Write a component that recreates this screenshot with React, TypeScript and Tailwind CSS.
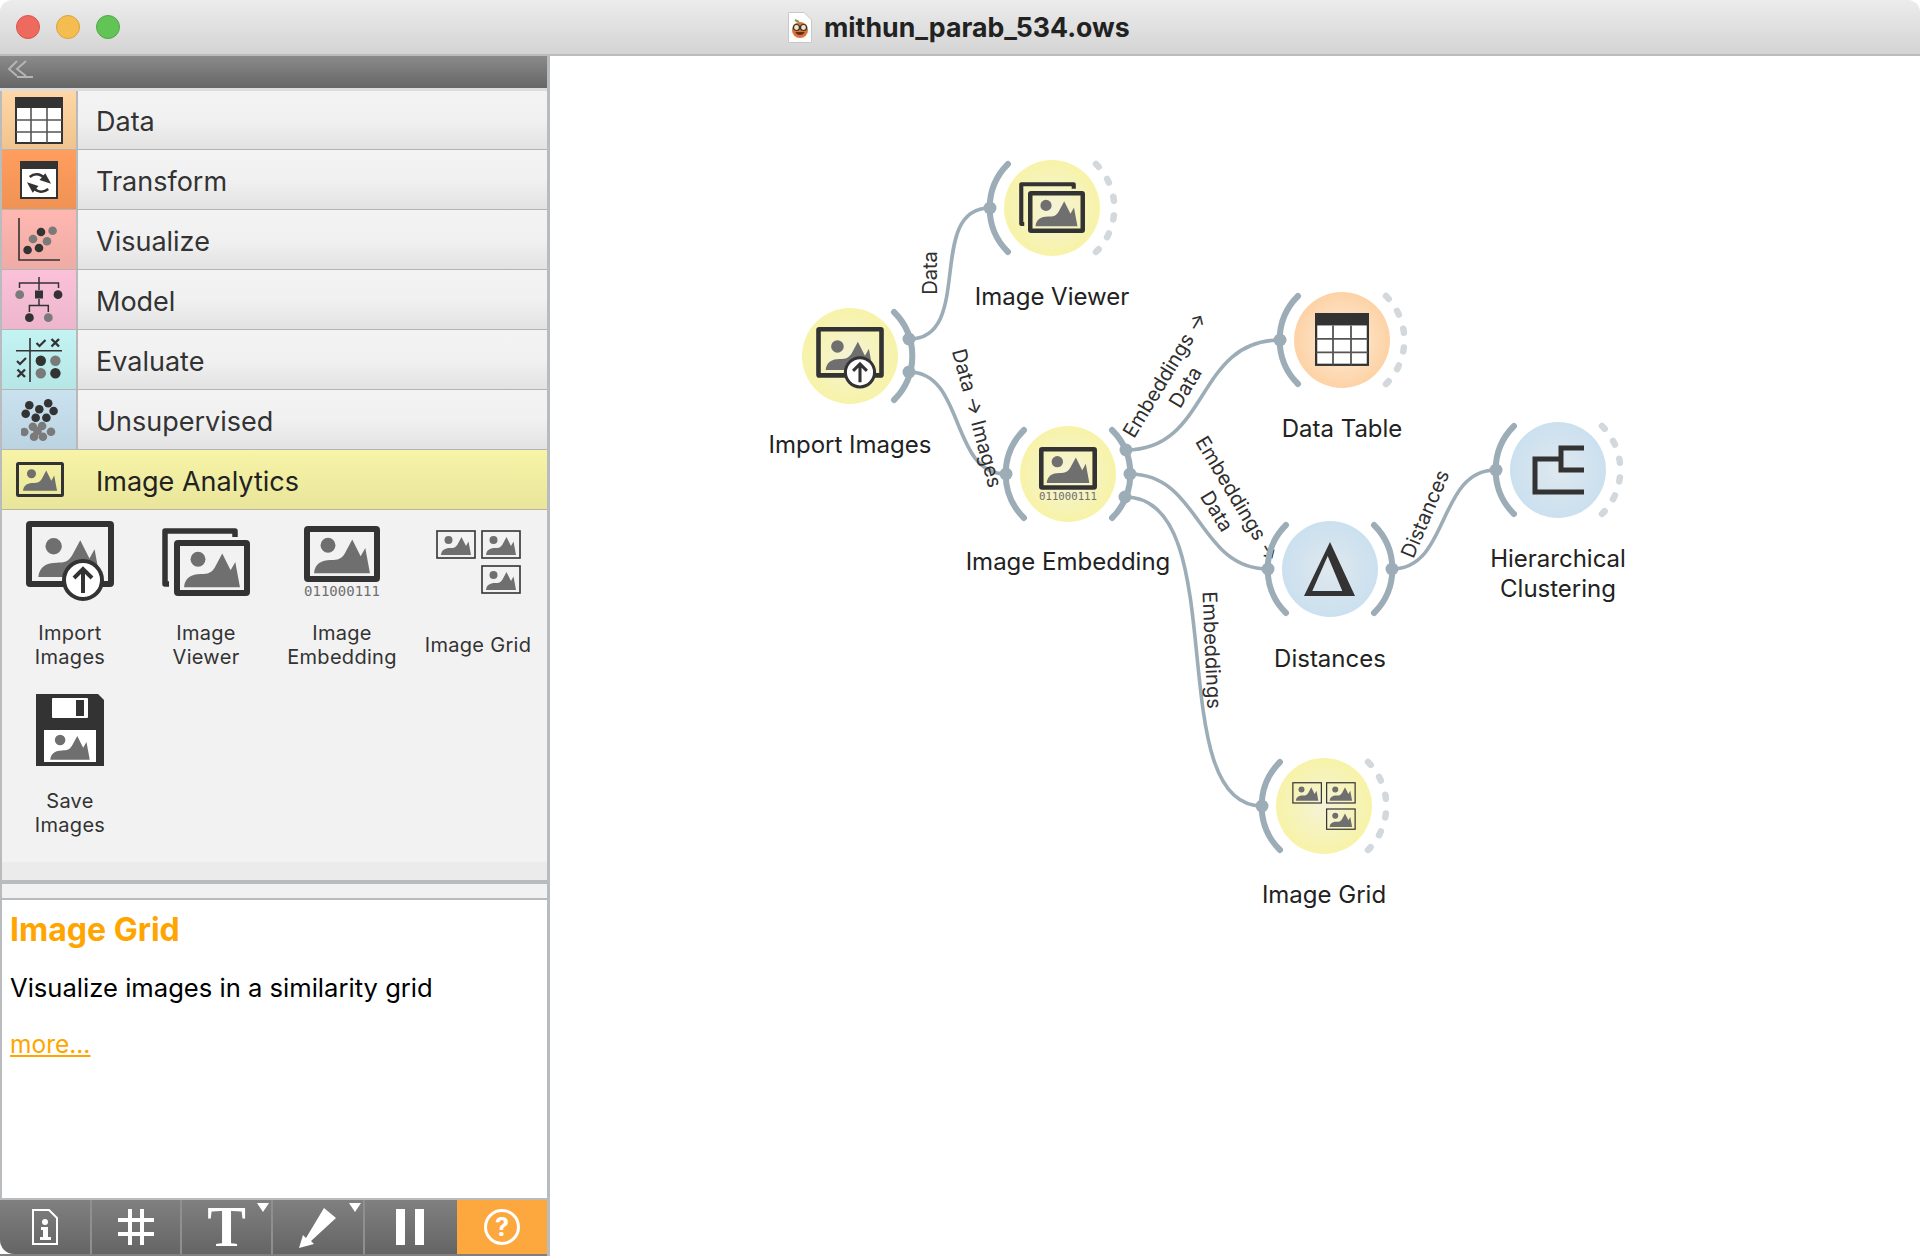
import React from 'react';

type SvgProps = React.SVGProps<SVGSVGElement>;

const DARK = '#333333';
const GRAY = '#6f6f6f';

// person + mountains, the glyph every image widget shares
const Pic = (props: SvgProps) => (
  <svg viewBox="0 0 64 44" {...props}>
    <circle cx="17" cy="12" r="8" fill={GRAY} />
    <path d="M2 42 C3 32 10 28 20 28 C28 28 31 27 35 21 L43 6 L52 24 L57 15 L62 42 Z" fill={GRAY} />
  </svg>
);

const ImportIcon = (props: SvgProps) => (
  <svg viewBox="0 0 88 82" {...props}>
    <rect x="3" y="3" width="82" height="60" rx="1" fill="none" stroke={DARK} strokeWidth="6" />
    <Pic x="10" y="13" width="66" height="45" />
    <circle cx="57" cy="59" r="19" fill="#fff" stroke={DARK} strokeWidth="4" />
    <path d="M57 72 V48 M48 57 L57 48 L66 57" fill="none" stroke={DARK} strokeWidth="4" />
  </svg>
);

const ViewerIcon = (props: SvgProps) => (
  <svg viewBox="0 0 88 68" {...props}>
    <path d="M7 56 H3 V3 H73 V9" fill="none" stroke={DARK} strokeWidth="5.5" strokeLinejoin="round" />
    <rect x="15" y="15" width="70" height="50" rx="1" fill="none" stroke={DARK} strokeWidth="6" />
    <Pic x="20" y="20" width="60" height="41" />
  </svg>
);

const EmbeddingIcon = (props: SvgProps) => (
  <svg viewBox="0 0 76 72" {...props}>
    <rect x="3" y="3" width="70" height="50" rx="1" fill="none" stroke={DARK} strokeWidth="6" />
    <Pic x="8" y="8" width="60" height="41" />
    <text x="38" y="70" textAnchor="middle" fontSize="14" fill={GRAY} fontFamily="'DejaVu Sans Mono', monospace">
      011000111
    </text>
  </svg>
);

const GridIcon = (props: SvgProps) => (
  <svg viewBox="0 0 85 64" {...props}>
    {[[1, 1], [46, 1], [46, 36]].map(([x, y]) => (
      <g key={`${x}-${y}`}>
        <rect x={x} y={y} width="38" height="27" fill="none" stroke={DARK} strokeWidth="1.6" />
        <Pic x={x + 3} y={y + 3} width="32" height="22" />
      </g>
    ))}
  </svg>
);

const SaveIcon = (props: SvgProps) => (
  <svg viewBox="0 0 68 72" {...props}>
    <path d="M0 0 H62 L68 6 V72 H0 Z" fill={DARK} />
    <rect x="16" y="4" width="36" height="20" rx="1" fill="#fff" />
    <rect x="40" y="6" width="8" height="16" fill={DARK} />
    <rect x="8" y="36" width="52" height="32" fill="#fff" />
    <Pic x="10" y="38" width="48" height="29" />
  </svg>
);

const TableIcon = (props: SvgProps) => (
  <svg viewBox="0 0 48 47" {...props}>
    <rect x="1" y="1" width="46" height="45" fill="#fff" stroke={DARK} strokeWidth="2" />
    <rect x="0" y="0" width="48" height="11" fill={DARK} />
    <path d="M16 11 V46 M32 11 V46 M1 23 H47 M1 35 H47" stroke="#555" strokeWidth="1.6" />
  </svg>
);

const TransformIcon = (props: SvgProps) => (
  <svg viewBox="0 0 38 38" {...props}>
    <rect x="1" y="1" width="36" height="36" fill="#fff" stroke={DARK} strokeWidth="2" />
    <rect x="0" y="0" width="38" height="8" fill={DARK} />
    <g transform="rotate(28 19 22)">
      <path d="M8 21 C10 16 15 13 22 15" fill="none" stroke={DARK} strokeWidth="2.6" />
      <path d="M20 10.5 L30 17 L18 19 Z" fill={DARK} />
      <path d="M30 23 C28 28 23 31 16 29" fill="none" stroke={DARK} strokeWidth="2.6" />
      <path d="M18 33.5 L8 27 L20 25 Z" fill={DARK} />
    </g>
  </svg>
);

const Dots = ({ items, r }: { items: number[][]; r: number }) => (
  <>
    {items.map(([x, y, g], i) => (
      <circle key={i} cx={x} cy={y} r={r} fill={g ? '#7a7a7a' : DARK} />
    ))}
  </>
);

const VisualizeIcon = (props: SvgProps) => (
  <svg viewBox="0 0 42 43" {...props}>
    <path d="M1 0 V42 H42" fill="none" stroke={DARK} strokeWidth="1.6" />
    <Dots r={4.3} items={[[23, 14, 0], [34.6, 12.7, 1], [15, 21, 1], [29, 23.3, 1], [21, 30, 0], [9.6, 32, 0]]} />
  </svg>
);

const ModelIcon = (props: SvgProps) => (
  <svg viewBox="0 0 48 46" {...props}>
    <path d="M24 0 V13 M4.5 11 V6 H43.5 V11 M24 22 V28 M14.4 35 V28.5 H33.3 V35" fill="none" stroke={DARK} strokeWidth="1.5" />
    <rect x="20" y="13.5" width="8" height="8" fill={DARK} />
    <Dots r={4.4} items={[[4.7, 17.7, 1], [43, 17.7, 0], [14.4, 40.7, 0], [33.3, 40.7, 1]]} />
  </svg>
);

const EvaluateIcon = (props: SvgProps) => (
  <svg viewBox="0 0 46 44" {...props}>
    <path d="M14 0 V44 M0 12.7 H46" stroke={DARK} strokeWidth="1.6" />
    <path d="M20.5 5 L23.5 8 L29.5 2 M1 23 L4 26 L10 20" fill="none" stroke={DARK} strokeWidth="2.2" />
    <path d="M35.5 1 L43 8.5 M43 1 L35.5 8.5 M1.5 31.5 L9 39 M9 31.5 L1.5 39" stroke={DARK} strokeWidth="2.4" />
    <Dots r={5.2} items={[[24.8, 22.7, 0], [39.4, 22.7, 1], [24.8, 35.3, 1], [39.4, 35.3, 0]]} />
  </svg>
);

const UnsupervisedIcon = (props: SvgProps) => (
  <svg viewBox="0 0 37 42" {...props}>
    <Dots
      r={4.3}
      items={[
        [8.3, 6.3, 0], [27.2, 4.3, 0], [18.3, 10.3, 0], [32.6, 12, 0], [4.7, 14.7, 0], [14.7, 18.7, 0], [25.4, 18.7, 0],
        [11.9, 27.7, 1], [21.1, 27, 1], [3.3, 33, 1], [30, 32.7, 1], [13, 37.7, 1], [21.9, 37.7, 1], [16.5, 32, 1],
      ]}
    />
  </svg>
);

const AnalyticsIcon = (props: SvgProps) => (
  <svg viewBox="0 0 48 35" {...props}>
    <rect x="1.5" y="1.5" width="45" height="32" rx="1" fill="none" stroke={DARK} strokeWidth="3" />
    <Pic x="5" y="5" width="38" height="25" />
  </svg>
);

const categories = [
  { name: 'Data', bg: 'bg-gradient-to-b from-[#ffd6a6] to-[#f0c48e]', icon: <TableIcon width="48" height="47" /> },
  { name: 'Transform', bg: 'bg-gradient-to-b from-[#ff9d5e] to-[#ef9355]', icon: <TransformIcon width="38" height="38" /> },
  { name: 'Visualize', bg: 'bg-gradient-to-b from-[#ffb7b1] to-[#efaba5]', icon: <VisualizeIcon width="42" height="43" /> },
  { name: 'Model', bg: 'bg-gradient-to-b from-[#fac1d9] to-[#eeb6cd]', icon: <ModelIcon width="48" height="46" /> },
  { name: 'Evaluate', bg: 'bg-gradient-to-b from-[#c3f3f3] to-[#b6e6e6]', icon: <EvaluateIcon width="46" height="44" /> },
  { name: 'Unsupervised', bg: 'bg-gradient-to-b from-[#cae1ef] to-[#bcd3e2]', icon: <UnsupervisedIcon width="37" height="42" /> },
];

const widgets = [
  { name: 'Import\nImages', icon: <ImportIcon width="88" height="82" /> },
  { name: 'Image\nViewer', icon: <ViewerIcon width="88" height="68" /> },
  { name: 'Image\nEmbedding', icon: <EmbeddingIcon width="76" height="72" /> },
  { name: 'Image Grid', icon: <GridIcon width="85" height="64" /> },
  { name: 'Save\nImages', icon: <SaveIcon width="68" height="72" /> },
];

// the canvas svg uses page coordinates through its viewBox
type CanvasNode = {
  x: number;
  y: number;
  caption: string;
  captionY: number;
  fill: string;
  left: boolean;
  right: 'solid' | 'open';
  glyph: (cx: number, cy: number) => React.ReactNode;
};

const nodes: CanvasNode[] = [
  {
    x: 850, y: 356, caption: 'Import Images', captionY: 445, fill: 'url(#yellow)', left: false, right: 'solid',
    glyph: (x, y) => <ImportIcon x={x - 34} y={y - 29} width="68" height="63" />,
  },
  {
    x: 1052, y: 208, caption: 'Image Viewer', captionY: 297, fill: 'url(#yellow)', left: true, right: 'open',
    glyph: (x, y) => <ViewerIcon x={x - 33} y={y - 26} width="66" height="51" />,
  },
  {
    x: 1068, y: 474, caption: 'Image Embedding', captionY: 562, fill: 'url(#yellow)', left: true, right: 'solid',
    glyph: (x, y) => <EmbeddingIcon x={x - 29} y={y - 27} width="58" height="55" />,
  },
  {
    x: 1342, y: 340, caption: 'Data Table', captionY: 429, fill: 'url(#orange)', left: true, right: 'open',
    glyph: (x, y) => <TableIcon x={x - 27} y={y - 27} width="54" height="53" />,
  },
  {
    x: 1330, y: 569, caption: 'Distances', captionY: 659, fill: 'url(#blue)', left: true, right: 'solid',
    glyph: (x, y) => (
      <path
        fillRule="evenodd"
        fill={DARK}
        d={`M${x} ${y - 27} L${x + 25} ${y + 27} H${x - 26} Z M${x - 2.3} ${y - 13} L${x - 17.7} ${y + 22} H${x + 12.3} Z`}
      />
    ),
  },
  {
    x: 1558, y: 470, caption: 'Hierarchical\nClustering', captionY: 574, fill: 'url(#blue)', left: true, right: 'open',
    glyph: (x, y) => (
      <path
        d={`M${x + 26} ${y - 22} H${x + 3} V${y} H${x + 26} M${x + 3} ${y - 11} H${x - 23} V${y + 22} H${x + 26}`}
        fill="none"
        stroke={DARK}
        strokeWidth="5"
      />
    ),
  },
  {
    x: 1324, y: 806, caption: 'Image Grid', captionY: 895, fill: 'url(#yellow)', left: true, right: 'open',
    glyph: (x, y) => <GridIcon x={x - 32} y={y - 24} width="64" height="48" />,
  },
];

const links = [
  'M909 339 C975 339 925 208 990 208',
  'M909 372 C965 372 950 474 1006 474',
  'M1126 450 C1210 450 1195 340 1280 340',
  'M1130 474 C1200 474 1198 569 1268 569',
  'M1125 497 C1235 497 1160 806 1262 806',
  'M1392 569 C1450 569 1437 470 1496 470',
];

const anchors = [
  [909, 339], [909, 372], [1006, 474], [1126, 450], [1130, 474], [1125, 497],
  [990, 208], [1280, 340], [1268, 569], [1392, 569], [1496, 470], [1262, 806],
];

const LinkLabel = ({ x, y, angle, lines }: { x: number; y: number; angle: number; lines: string[] }) => (
  <text transform={`translate(${x} ${y}) rotate(${angle})`} textAnchor="middle" fontSize="20" fill="#2f2f2f">
    {lines.map((line, i) => (
      <tspan key={i} x="0" y={i * 24 - (lines.length - 1) * 12 + 7}>
        {line}
      </tspan>
    ))}
  </text>
);

const Canvas = () => (
  <div className="relative flex-1 bg-white">
    <svg viewBox="550 56 1370 1200" className="absolute inset-0 h-full w-full">
      <defs>
        <radialGradient id="yellow">
          <stop offset="0%" stopColor="#f5f3d8" />
          <stop offset="100%" stopColor="#f7f3a8" />
        </radialGradient>
        <radialGradient id="orange">
          <stop offset="0%" stopColor="#fdeedd" />
          <stop offset="100%" stopColor="#fdd2a5" />
        </radialGradient>
        <radialGradient id="blue">
          <stop offset="0%" stopColor="#dfe8ee" />
          <stop offset="100%" stopColor="#cbe0ef" />
        </radialGradient>
      </defs>

      {links.map((d) => (
        <path key={d} d={d} fill="none" stroke="#9cadb7" strokeWidth="3.6" />
      ))}

      {/* this label runs under the Distances node, its arrow is cut off there */}
      <LinkLabel x={1227} y={505} angle={59} lines={['Embeddings →', 'Data']} />

      {nodes.map((n) => (
        <g key={n.caption}>
          <circle cx={n.x} cy={n.y} r="58" fill="#fff" />
          <circle cx={n.x} cy={n.y} r="48" fill={n.fill} />
          {n.glyph(n.x, n.y)}
          {n.left && (
            <path
              d={`M${n.x - 44} ${n.y - 44} A62 62 0 0 0 ${n.x - 44} ${n.y + 44}`}
              fill="none"
              stroke="#9cadb7"
              strokeWidth="6"
              strokeLinecap="round"
            />
          )}
          {n.right === 'solid' ? (
            <path
              d={`M${n.x + 44} ${n.y - 44} A62 62 0 0 1 ${n.x + 44} ${n.y + 44}`}
              fill="none"
              stroke="#9cadb7"
              strokeWidth="6"
              strokeLinecap="round"
            />
          ) : (
            <path
              d={`M${n.x + 44} ${n.y - 44} A62 62 0 0 1 ${n.x + 44} ${n.y + 44}`}
              fill="none"
              stroke="#d3d8dc"
              strokeWidth="6.5"
              strokeLinecap="round"
              strokeDasharray="4 14.76"
            />
          )}
        </g>
      ))}

      {anchors.map(([x, y]) => (
        <circle key={`${x}-${y}`} cx={x} cy={y} r="6.5" fill="#9cadb7" />
      ))}

      <LinkLabel x={930} y={273} angle={-90} lines={['Data']} />
      <LinkLabel x={977} y={418} angle={75} lines={['Data → Images']} />
      <LinkLabel x={1175} y={381} angle={-59} lines={['Embeddings →', 'Data']} />
      <LinkLabel x={1425} y={514} angle={-67} lines={['Distances']} />
      <LinkLabel x={1212} y={650} angle={87.5} lines={['Embeddings']} />
    </svg>

    {nodes.map((n) => (
      <div
        key={n.caption}
        className="absolute -translate-x-1/2 -translate-y-1/2 whitespace-pre text-center text-[24px] leading-[30px] text-[#222]"
        style={{ left: n.x - 550, top: n.captionY - 56 }}
      >
        {n.caption}
      </div>
    ))}
  </div>
);

const Toolbar = () => (
  <div className="flex h-[56px] shrink-0 flex-col">
    <div className="flex h-[54px] rounded-bl-[14px] bg-gradient-to-b from-[#808080] to-[#656565]">
      <div className="flex w-[92px] items-center justify-center border-r-2 border-[#8f8f8f]">
        <svg width="26" height="36" viewBox="0 0 26 36">
          <path d="M1 1 H17 L25 9 V35 H1 Z" fill="none" stroke="#fff" strokeWidth="2" />
          <circle cx="13" cy="13" r="3" fill="#fff" />
          <path d="M9 18 H16 V28 H19 V31 H8 V28 H11 V21 H9 Z" fill="#fff" />
        </svg>
      </div>
      <div className="flex w-[90px] items-center justify-center border-r-2 border-[#8f8f8f]">
        <svg width="36" height="36" viewBox="0 0 36 36">
          <path d="M12 0 V36 M24 0 V36 M0 11 H36 M0 25 H36" stroke="#fff" strokeWidth="4" />
        </svg>
      </div>
      <div className="relative flex w-[91px] items-center justify-center border-r-2 border-[#8f8f8f]">
        <div className="h-[54px] font-['Liberation_Serif',serif] text-[58px] font-bold leading-[54px] text-white">T</div>
        <svg className="absolute right-[2px] top-[3px]" width="12" height="9" viewBox="0 0 12 9">
          <path d="M0 0 H12 L6 9 Z" fill="#fff" />
        </svg>
      </div>
      <div className="relative flex w-[92px] items-center justify-center border-r-2 border-[#8f8f8f]">
        <svg width="38" height="42" viewBox="0 0 38 42">
          <path d="M0 42 L4 29 L7 32 L25 2 L37 12 L12 35 L15 38 Z" fill="#fff" />
        </svg>
        <svg className="absolute right-[2px] top-[3px]" width="12" height="9" viewBox="0 0 12 9">
          <path d="M0 0 H12 L6 9 Z" fill="#fff" />
        </svg>
      </div>
      <div className="flex w-[92px] items-center justify-center gap-[10px] pr-[2px]">
        <div className="h-[36px] w-[9px] bg-white" />
        <div className="h-[36px] w-[9px] bg-white" />
      </div>
      <div className="flex flex-1 items-center justify-center bg-[#fca83f]">
        <div className="flex h-[36px] w-[36px] items-center justify-center rounded-full border-[3px] border-white text-[25px] font-bold leading-none text-white">
          ?
        </div>
      </div>
    </div>
    <div className="h-[2px] bg-[#808080]" />
  </div>
);

const Sidebar = () => (
  <div className="flex w-[550px] shrink-0 flex-col border-r-[3px] border-[#b9bcbe]">
    <div className="flex h-[32px] shrink-0 bg-gradient-to-b from-[#8b8b8b] to-[#666] pl-[7px] pt-[4px]">
      <svg width="26" height="18" viewBox="0 0 26 18">
        <path d="M10 1 L2 9 L10 16 M19 1 L10 9 L19 16 M10 17 H26" fill="none" stroke="#b5b5b5" strokeWidth="2" />
      </svg>
    </div>
    <div className="h-[3px] shrink-0 bg-[#dcdcdc]" />
    <div className="flex flex-1 flex-col border-l-2 border-[#b9bcbe]">
      {categories.map((c) => (
        <div key={c.name} className="flex h-[60px] shrink-0 border-b border-[#b5b5b5] first:h-[59px]">
          <div className={`flex w-[74px] items-center justify-center ${c.bg}`}>{c.icon}</div>
          <div className="flex flex-1 items-center border-l-2 border-[#b9b9b9] bg-gradient-to-b from-[#f3f3f3] via-[#f1f1f1] to-[#e2e2e2] pl-[18px] pt-[5px] text-[27px] text-[#333]">
            {c.name}
          </div>
        </div>
      ))}
      <div className="flex h-[60px] shrink-0 items-center border-b border-[#b5b5a0] bg-gradient-to-b from-[#f7f4a8] to-[#e9e69b] text-[27px] text-[#222]">
        <div className="flex w-[76px] justify-center">
          <AnalyticsIcon width="48" height="35" />
        </div>
        <span className="pl-[18px] pt-[5px]">Image Analytics</span>
      </div>

      <div className="grid h-[352px] shrink-0 grid-cols-[136px_136px_136px_136px] content-start bg-[#f2f2f2] pt-[4px]">
        {widgets.map((w) => (
          <div key={w.name} className="flex h-[168px] flex-col items-center">
            <div className="flex h-[94px] items-center justify-center pt-[2px]">{w.icon}</div>
            <div className="flex h-[74px] items-center whitespace-pre text-center text-[20px] leading-[24px] tracking-[0.3px] text-[#333]">
              {w.name}
            </div>
          </div>
        ))}
      </div>
      <div className="h-[18px] shrink-0 bg-[#ebebeb]" />
      <div className="h-[4px] shrink-0 bg-[#b9bcbe]" />
      <div className="h-[14px] shrink-0 bg-[#f2f2f2]" />
      <div className="h-[2px] shrink-0 bg-[#b9bcbe]" />

      <div className="flex-1 bg-white pl-[8px]">
        <h2 className="pt-[8px] text-[32px] font-bold leading-[44px] text-[#ffa500]">Image Grid</h2>
        <p className="mt-[21px] text-[25.6px] leading-[30px] text-black">Visualize images in a similarity grid</p>
        <a className="mt-[26px] block text-[24.5px] leading-[30px] text-[#ffa500] underline">more...</a>
      </div>
      <div className="h-[2px] shrink-0 bg-[#b9bcbe]" />
    </div>
    <Toolbar />
  </div>
);

const TitleBar = () => (
  <div className="flex h-[56px] shrink-0 items-center rounded-t-[12px] border-b-2 border-[#bcbcbc] bg-gradient-to-b from-[#ececec] to-[#d4d4d4] pl-[16px]">
    <div className="flex gap-[16px]">
      <div className="h-[24px] w-[24px] rounded-full border border-[#d9534a] bg-[#ee6a5f]" />
      <div className="h-[24px] w-[24px] rounded-full border border-[#d9a23f] bg-[#f5bd4f]" />
      <div className="h-[24px] w-[24px] rounded-full border border-[#4fa843] bg-[#61c454]" />
    </div>
    <div className="ml-[668px] flex items-center gap-[12px]">
      <svg width="24" height="31" viewBox="0 0 24 31">
        <path d="M0.5 0.5 H16 L23.5 8 V30.5 H0.5 Z" fill="#fff" stroke="#c8c8c8" />
        <circle cx="12" cy="18" r="8" fill="#d9713a" />
        <path d="M7 8 L11 10" stroke="#7fa04a" strokeWidth="2" />
        <circle cx="8.5" cy="15.5" r="3" fill="#f4e6c8" stroke="#333" strokeWidth="1.2" />
        <circle cx="15.5" cy="15.5" r="3" fill="#f4e6c8" stroke="#333" strokeWidth="1.2" />
        <path d="M7.5 20 H16.5 C16 24 8 24 7.5 20 Z" fill="#6a2a1a" />
      </svg>
      <span className="text-[26.7px] font-bold leading-none text-[#222]">mithun_parab_534.ows</span>
    </div>
  </div>
);

export default function App() {
  return (
    <div className="flex h-[1256px] w-[1920px] flex-col overflow-hidden bg-white font-[Inter,sans-serif]">
      <TitleBar />
      <div className="flex min-h-0 flex-1">
        <Sidebar />
        <Canvas />
      </div>
    </div>
  );
}
